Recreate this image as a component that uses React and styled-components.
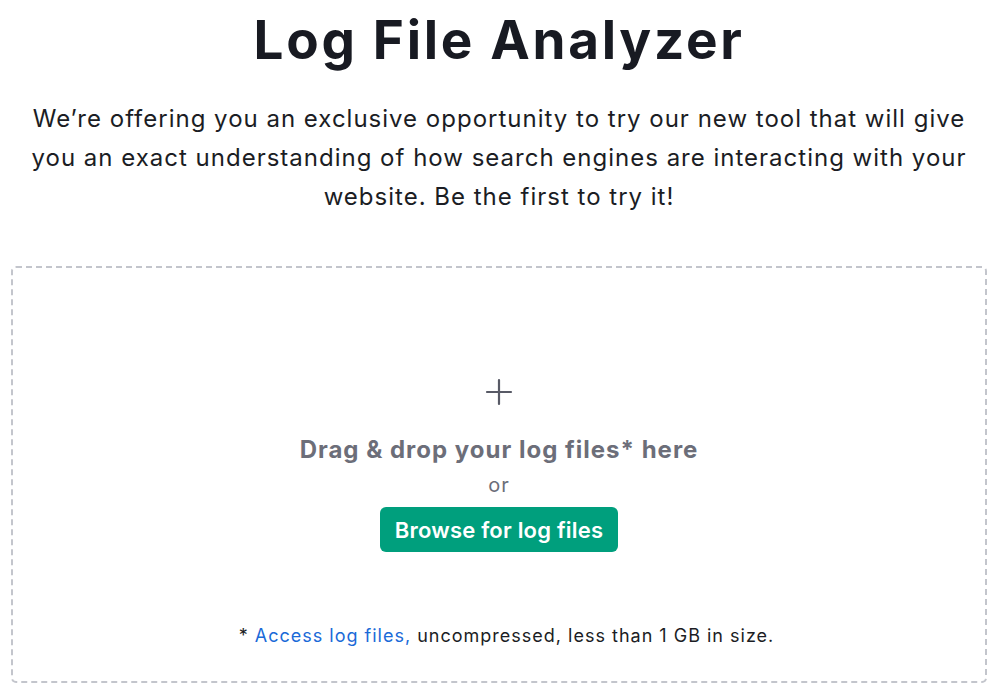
import React from 'react';
import styled, { createGlobalStyle } from 'styled-components';

const GlobalStyle = createGlobalStyle`
  html, body {
    margin: 0;
    padding: 0;
    background: #fff;
    font-family: Inter, "Noto Sans", sans-serif;
    color: #1b1d24;
  }
`;

const Page = styled.div`
  display: flex;
  flex-direction: column;
  align-items: center;
  padding: 0 13px 10px 11px;
`;

const Title = styled.h1`
  margin: 8px 0 0;
  font-size: 53px;
  font-weight: 700;
  line-height: 64px;
  letter-spacing: 2.7px;
  color: #181a22;
`;

const Intro = styled.p`
  margin: 27px 0 0;
  max-width: 960px;
  text-align: center;
  font-size: 24px;
  line-height: 39px;
  letter-spacing: 1px;
  color: #1b1d24;
`;

const DropZone = styled.div`
  align-self: stretch;
  box-sizing: border-box;
  height: 417px;
  margin-top: 50px;
  border: 2px dashed #c3c5cc;
  border-radius: 5px;
  display: flex;
  flex-direction: column;
  align-items: center;
  padding-top: 110px;
`;

const PlusIcon = styled.svg`
  width: 28px;
  height: 28px;
  color: #585a66;
`;

const DropLabel = styled.div`
  margin-top: 27px;
  font-size: 24px;
  font-weight: 700;
  line-height: 34px;
  letter-spacing: 1px;
  color: #6c6e79;
`;

const Or = styled.div`
  margin-top: 3px;
  font-size: 20px;
  line-height: 30px;
  letter-spacing: 1px;
  color: #6c6e79;
`;

const BrowseButton = styled.button`
  margin-top: 7px;
  height: 45px;
  padding: 0 15px;
  border: none;
  border-radius: 6px;
  background: #009f7d;
  color: #fff;
  font-family: inherit;
  font-size: 22px;
  font-weight: 600;
  letter-spacing: 0.2px;
  cursor: pointer;
`;

const Note = styled.div`
  margin-top: auto;
  margin-bottom: 35px;
  padding-left: 15px;
  font-size: 18px;
  letter-spacing: 1px;
  color: #1b1d24;
`;

const Link = styled.a`
  color: #1a6ad8;
  text-decoration: none;
`;

export default function App() {
  return (
    <>
      <GlobalStyle />
      <Page>
        <Title>Log File Analyzer</Title>
        <Intro>
          We’re offering you an exclusive opportunity to try our new tool that will give
          you an exact understanding of how search engines are interacting with your
          website. Be the first to try it!
        </Intro>
        <DropZone>
          <PlusIcon viewBox="0 0 28 28" fill="none" stroke="currentColor" strokeWidth="2.2" strokeLinecap="round">
            <path d="M14 2v24M2 14h24" />
          </PlusIcon>
          <DropLabel>Drag &amp; drop your log files* here</DropLabel>
          <Or>or</Or>
          <BrowseButton>Browse for log files</BrowseButton>
          <Note>
            * <Link href="#">Access log files,</Link> uncompressed, less than 1 GB in size.
          </Note>
        </DropZone>
      </Page>
    </>
  );
}
